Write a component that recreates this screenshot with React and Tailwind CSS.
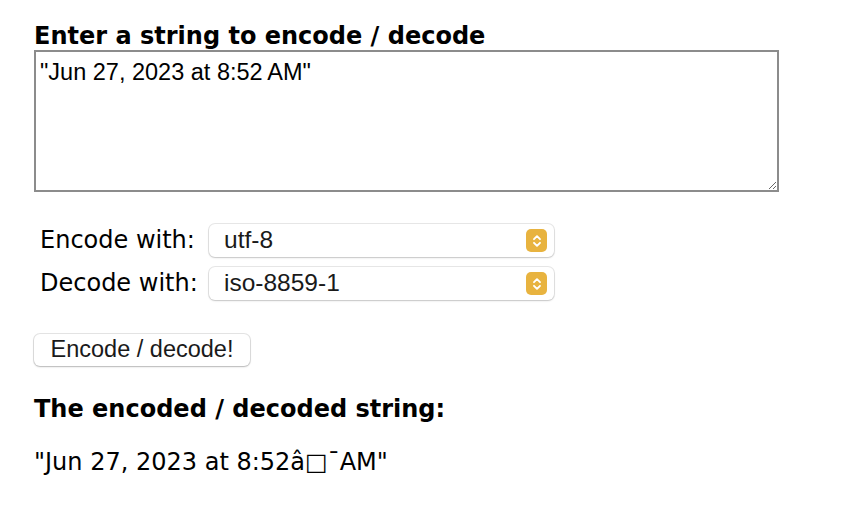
import { useState } from 'react';

const sysFont = { fontFamily: '"Liberation Sans", Arial, sans-serif' };

const Chevrons = () => (
  <span className="flex h-[23px] w-[21px] shrink-0 items-center justify-center rounded-[5px] bg-[#e8b33f]">
    <svg width="10" height="14" viewBox="0 0 10 14" fill="none" stroke="white" strokeWidth="1.9" strokeLinecap="round" strokeLinejoin="round">
      <path d="M2 5.2 L5 2.2 L8 5.2" />
      <path d="M2 8.8 L5 11.8 L8 8.8" />
    </svg>
  </span>
);

const FakeSelect = ({ value }) => (
  <div
    className="flex h-[33px] w-[345px] shrink-0 items-center justify-between rounded-[6px] bg-white pl-[15px] pr-[7px] text-[24.5px] text-[#1a1a1a] shadow-[0_0_0_1px_rgba(0,0,0,0.09),0_1px_2px_rgba(0,0,0,0.15)]"
    style={sysFont}
  >
    <span className="leading-none">{value}</span>
    <Chevrons />
  </div>
);

export default function App() {
  const [text, setText] = useState('"Jun 27, 2023 at 8:52\u202FAM"');

  return (
    <div className="min-h-[508px] bg-white pl-[34px] pt-[22px] text-black" style={{ fontFamily: '"DejaVu Sans", Verdana, sans-serif' }}>
      <h2 className="whitespace-nowrap text-[24px] font-bold leading-[28px]">Enter a string to encode / decode</h2>
      <textarea
        value={text}
        onChange={(e) => setText(e.target.value)}
        className="block h-[142px] w-[745px] resize border-2 border-[#8c8c8c] px-[4px] pt-[6px] text-[23.5px] leading-[28px] outline-none"
        style={sysFont}
      />

      <div className="mt-[32px] flex flex-col gap-[10px] pl-[6px] text-[24px] leading-[33px]">
        <div className="flex items-center gap-[12px]">
          <span className="w-[157px] shrink-0 whitespace-nowrap">Encode with:</span>
          <FakeSelect value="utf-8" />
        </div>
        <div className="flex items-center gap-[12px]">
          <span className="w-[157px] shrink-0 whitespace-nowrap">Decode with:</span>
          <FakeSelect value="iso-8859-1" />
        </div>
      </div>

      <button
        className="mt-[34px] flex h-[32px] w-[216px] items-center justify-center rounded-[6px] bg-white text-[23.5px] leading-none text-[#1a1a1a] shadow-[0_0_0_1px_rgba(0,0,0,0.1),0_1px_2px_rgba(0,0,0,0.2)]"
        style={sysFont}
      >
        Encode / decode!
      </button>

      <h2 className="mt-[29px] whitespace-nowrap text-[24px] font-bold leading-[28px]">The encoded / decoded string:</h2>
      <p className="mt-[25px] whitespace-nowrap text-[24px] leading-[28px]">"Jun 27, 2023 at 8:52â□¯AM"</p>
    </div>
  );
}
